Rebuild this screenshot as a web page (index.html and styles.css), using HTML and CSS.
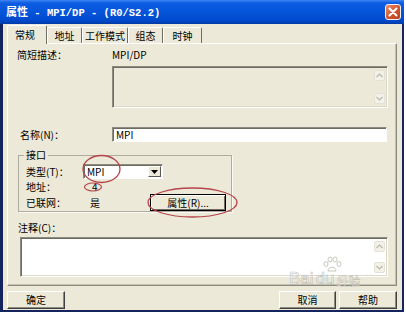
FILE: index.html
```html
<!DOCTYPE html>
<html lang="zh-CN">
<head>
  <meta charset="UTF-8">
  <title>属性 - MPI/DP - (R0/S2.2)</title>
  <link rel="stylesheet" href="styles.css">
</head>
<body>
  <div class="window">
    <div class="titlebar">
      <span class="title">属性<span class="latin"> - MPI/DP - (R0/S2.2)</span></span>
      <span class="close">
        <svg width="10" height="10" viewBox="0 0 10 10"><path d="M1.5 1.5 L8.5 8.5 M8.5 1.5 L1.5 8.5" stroke="#fff" stroke-width="2" stroke-linecap="round"/></svg>
      </span>
    </div>

    <div class="frame">
      <div class="tabs">
        <span class="tab active">常规</span>
        <span class="tab">地址</span>
        <span class="tab">工作模式</span>
        <span class="tab">组态</span>
        <span class="tab">时钟</span>
      </div>

      <div class="panel">
        <div class="row desc-row">
          <span class="label">简短描述：</span>
          <span class="value">MPI/DP</span>
        </div>
        <div class="field desc-box">
          <div class="field-text"></div>
          <div class="scroll">
            <span class="arrow"><svg width="7" height="5" viewBox="0 0 7 5"><path d="M0.5 4 L3.5 1 L6.5 4" fill="none" stroke="#b9b7ab" stroke-width="1.2"/></svg></span>
            <span class="arrow"><svg width="7" height="5" viewBox="0 0 7 5"><path d="M0.5 1 L3.5 4 L6.5 1" fill="none" stroke="#b9b7ab" stroke-width="1.2"/></svg></span>
          </div>
        </div>

        <div class="row name-row">
          <span class="label name-label">名称(N)：</span>
          <div class="input">MPI</div>
        </div>

        <fieldset class="group">
          <legend>接口</legend>
          <div class="grow">
            <span class="glabel">类型(T)：</span>
            <div class="select">
              <span class="select-text">MPI</span>
              <span class="drop"><svg width="7" height="4" viewBox="0 0 7 4"><path d="M0 0 H7 L3.5 4 Z" fill="#000"/></svg></span>
            </div>
          </div>
          <div class="grow">
            <span class="glabel">地址：</span>
            <span class="gval addr">4</span>
          </div>
          <div class="grow tall">
            <span class="glabel">已联网：</span>
            <span class="gval yes">是</span>
            <button class="btn default">属性(R)...</button>
          </div>
        </fieldset>

        <div class="comment-label">注释(C)：</div>
        <div class="field comment-box">
          <div class="field-text"></div>
          <div class="scroll">
            <span class="arrow"><svg width="7" height="5" viewBox="0 0 7 5"><path d="M0.5 4 L3.5 1 L6.5 4" fill="none" stroke="#b9b7ab" stroke-width="1.2"/></svg></span>
            <span class="arrow"><svg width="7" height="5" viewBox="0 0 7 5"><path d="M0.5 1 L3.5 4 L6.5 1" fill="none" stroke="#b9b7ab" stroke-width="1.2"/></svg></span>
          </div>
        </div>
      </div>

      <div class="footer">
        <button class="btn">确定</button>
        <span class="spacer"></span>
        <button class="btn">取消</button>
        <button class="btn">帮助</button>
      </div>
    </div>

    <!-- red marks drawn over the screenshot -->
    <svg class="marks" width="406" height="316" viewBox="0 0 406 316">
      <ellipse cx="101.5" cy="169" rx="18.5" ry="13.5" fill="none" stroke="#b5454a" stroke-width="1.3"/>
      <ellipse cx="93" cy="187" rx="8.5" ry="4" fill="none" stroke="#b5454a" stroke-width="1.2"/>
      <ellipse cx="192.5" cy="202.5" rx="44.5" ry="14.5" fill="none" stroke="#b5454a" stroke-width="1.3"/>
    </svg>

    <div class="watermark">
      <svg class="paw" width="20" height="17" viewBox="0 0 20 17">
        <g fill="none" stroke="#c9c7bd" stroke-width="1">
          <ellipse cx="4" cy="8" rx="2" ry="2.5"/>
          <ellipse cx="8" cy="3.5" rx="2" ry="2.5"/>
          <ellipse cx="13" cy="3.5" rx="2" ry="2.5"/>
          <ellipse cx="17" cy="8" rx="2" ry="2.5"/>
          <path d="M6 15 C6 10 14 10 14 15 Z"/>
        </g>
      </svg>
      <span class="wm-latin">Bai</span><span class="wm-latin">du</span><span class="wm-cjk">经验</span>
    </div>
  </div>
</body>
</html>
```

FILE: styles.css
```css
* { box-sizing: border-box; }
body {
  margin: 0;
  background: #fff;
  font-family: "Noto Sans CJK SC", "Liberation Sans", sans-serif;
  font-size: 10px;
  line-height: 12px;
  color: #000;
}
.window {
  position: relative;
  width: 404px;
  height: 312px;
  display: flex;
  flex-direction: column;
  background: #ece9d8;
}
.titlebar {
  flex: none;
  height: 24px;
  display: flex;
  align-items: center;
  justify-content: space-between;
  padding: 0 3px 0 6px;
  background: linear-gradient(#3d86f5 0, #0d5ce2 3px, #0556dc 45%, #0049cc 85%, #003aa6 100%);
  color: #fff;
}
.title {
  font-weight: bold;
  font-size: 11px;
  white-space: pre;
}
.title .latin { font-family: "Liberation Mono", "DejaVu Sans Mono", monospace; font-size: 10.5px; }
.close {
  width: 16px;
  height: 16px;
  display: flex;
  align-items: center;
  justify-content: center;
  border: 1px solid #f2f2f2;
  border-radius: 3px;
  background: linear-gradient(135deg, #eb8e6f, #d2542f 55%, #b8401f);
}
.frame {
  flex: 1;
  display: flex;
  flex-direction: column;
  border: 0 solid #14245e;
  border-width: 0 2px 2px 3px;
}
.tabs {
  flex: none;
  height: 19px;
  display: flex;
  align-items: flex-end;
  padding-left: 4px;
}
.tab {
  height: 16px;
  display: flex;
  align-items: center;
  justify-content: center;
  border: 1px solid #fff;
  border-bottom: none;
  border-right-color: #6f6e66;
  border-radius: 2px 2px 0 0;
  background: #ece9d8;
}
.tab:nth-child(2) { width: 35px; }
.tab:nth-child(3) { width: 46px; }
.tab:nth-child(4) { width: 35px; }
.tab:nth-child(5) { width: 39px; }
.tab.active {
  position: relative;
  z-index: 1;
  width: 40px;
  height: 19px;
  margin-bottom: -1px;
  padding: 0 4px 1px 0;
}
.panel {
  flex: none;
  height: 243px;
  margin: 0 5px 0 4px;
  padding: 5px 9px 0;
  border: 1px solid;
  border-color: #fff #8c8b80 #8c8b80 #fff;
  box-shadow: inset -1px -1px 0 #c4c1b2;
}
.row {
  display: flex;
  align-items: center;
}
.label { width: 95px; flex: none; }
.name-label { padding-left: 3px; }
.desc-row { height: 12px; }
.field {
  display: flex;
  border: 1px solid;
  border-color: #8d8b80 #fff #fff #8d8b80;
  box-shadow: inset 1px 1px 0 #6e6c62, inset -1px -1px 0 #dcd9cb;
}
.field-text { flex: 1; }
.desc-box {
  width: 276px;
  height: 42px;
  margin: 5px 0 0 95px;
}
.scroll {
  width: 13px;
  display: flex;
  flex-direction: column;
  justify-content: space-between;
  padding: 3px 2px 3px 0;
}
.arrow {
  width: 11px;
  height: 11px;
  display: flex;
  align-items: center;
  justify-content: center;
  border: 1px solid #e4e2d8;
  border-radius: 2px;
  background: #f3f1e8;
}
.name-row {
  height: 15px;
  margin-top: 19px;
}
.input {
  width: 276px;
  height: 15px;
  padding: 1px 0 0 3px;
  background: #fff;
  border: 1px solid;
  border-color: #8d8b80 #fff #fff #8d8b80;
  box-shadow: inset 1px 1px 0 #6e6c62;
}
.group {
  width: 214px;
  min-width: 0;
  margin: 7px 0 0 1px;
  padding: 3px 0 0 7px;
  border: 1px solid #aeac9e;
  box-shadow: 1px 1px 0 #fbfaf5;
}
.group legend {
  padding: 0 2px;
  margin-left: -2px;
  line-height: 12px;
}
.grow {
  height: 15px;
  display: flex;
  align-items: center;
}
.grow.tall { height: 17px; }
.glabel { width: 57px; flex: none; }
.select {
  width: 80px;
  height: 15px;
  display: flex;
  align-items: center;
  background: #fff;
  border: 1px solid;
  border-color: #8d8b80 #fff #fff #8d8b80;
  box-shadow: inset 1px 1px 0 #6e6c62;
}
.select-text { flex: 1; padding-left: 3px; }
.drop {
  width: 13px;
  height: 11px;
  margin-right: 1px;
  display: flex;
  align-items: center;
  justify-content: center;
  background: #ece9d8;
  border: 1px solid;
  border-color: #fff #5a594f #5a594f #fff;
}
.addr { padding-left: 9px; }
.yes { width: 67px; padding-left: 7px; }
.btn {
  height: 18px;
  padding: 0;
  font: inherit;
  color: #000;
  background: #ece9d8;
  border: 1px solid;
  border-color: #fff #404040 #404040 #fff;
  box-shadow: inset -1px -1px 0 #8c8b80;
}
.btn.default {
  width: 76px;
  height: 17px;
  border-color: #000;
  box-shadow: inset 1px 1px 0 #fff, inset -1px -1px 0 #6e6c62;
}
.comment-label {
  margin-top: 10px;
  padding-left: 1px;
}
.comment-box {
  width: 368px;
  height: 40px;
  margin: 3px 0 0 3px;
  background: #fff;
}
.footer {
  flex: none;
  height: 24px;
  display: flex;
  padding: 5px 5px 1px 4px;
  gap: 3px;
}
.footer .btn { width: 58px; }
.footer .btn:nth-child(3) { width: 57px; }
.spacer { flex: 1; }
.marks {
  position: absolute;
  left: 0;
  top: 0;
  pointer-events: none;
}
.watermark {
  position: absolute;
  left: 289px;
  top: 271px;
  display: flex;
  align-items: flex-end;
  pointer-events: none;
}
.paw {
  position: absolute;
  left: 33px;
  top: -15px;
}
.wm-latin {
  font-family: "Liberation Sans", sans-serif;
  font-size: 17px;
  line-height: 16px;
  color: rgba(255, 255, 255, 0.7);
  -webkit-text-stroke: 0.6px rgba(150, 148, 138, 0.6);
  margin-right: 2px;
}
.wm-cjk {
  font-size: 12px;
  line-height: 13px;
  color: rgba(255, 255, 255, 0.7);
  -webkit-text-stroke: 0.4px rgba(150, 148, 138, 0.6);
}
```
